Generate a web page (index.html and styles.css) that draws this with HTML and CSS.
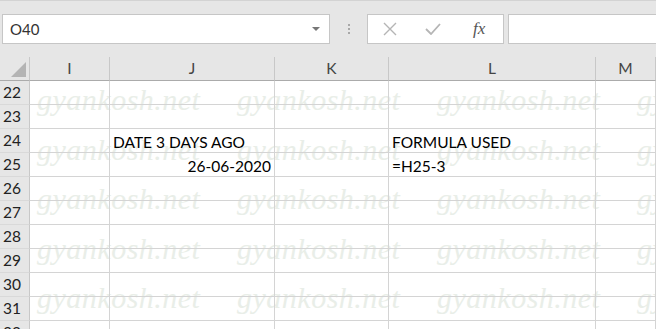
FILE: index.html
```html
<!DOCTYPE html>
<html lang="en">
<head>
    <meta charset="UTF-8">
    <meta name="viewport" content="width=device-width, initial-scale=1.0">
    <title>Sheet - date 3 days ago</title>
    <link rel="stylesheet" href="styles.css">
</head>
<body>
    <div class="formula-bar">
        <div class="name-box">
            <span>O40</span>
            <span class="caret"></span>
        </div>
        <div class="grip"><i></i><i></i><i></i></div>
        <div class="fn-box">
            <svg class="icon" width="14" height="14" viewBox="0 0 14 14">
                <path d="M1 1 L13 13 M13 1 L1 13" stroke="#b5b5b5" stroke-width="1.4" fill="none"/>
            </svg>
            <svg class="icon" width="16" height="12" viewBox="0 0 16 12">
                <path d="M1 6 L6 11 L15 1" stroke="#b5b5b5" stroke-width="1.8" fill="none"/>
            </svg>
            <span class="fx">fx</span>
        </div>
        <div class="formula-input"></div>
    </div>

    <div class="sheet">
        <!-- watermark sits behind the cells -->
        <div class="watermarks">
            <div class="marks" id="watermarks"></div>
        </div>

        <div class="grid" id="grid">
            <div class="corner"><span class="tri"></span></div>
            <div class="col-head">I</div>
            <div class="col-head">J</div>
            <div class="col-head">K</div>
            <div class="col-head">L</div>
            <div class="col-head">M</div>
        </div>
    </div>

    <script>
        const cells = {
            24: { J: { text: 'DATE 3 DAYS AGO' }, L: { text: 'FORMULA USED' } },
            25: { J: { text: '26-06-2020', right: true }, L: { text: '=H25-3' } }
        };
        const cols = ['I', 'J', 'K', 'L', 'M'];
        const grid = document.getElementById('grid');

        for (let r = 22; r <= 32; r++) {
            const head = document.createElement('div');
            head.className = 'row-head';
            head.textContent = r;
            grid.appendChild(head);

            cols.forEach(c => {
                const cell = document.createElement('div');
                cell.className = 'cell';
                const data = cells[r] && cells[r][c];
                if (data) {
                    cell.textContent = data.text;
                    if (data.right) cell.classList.add('num');
                }
                grid.appendChild(cell);
            });
        }

        const marks = document.getElementById('watermarks');
        for (let i = 0; i < 20; i++) {
            const m = document.createElement('span');
            m.textContent = 'gyankosh.net';
            marks.appendChild(m);
        }
    </script>
</body>
</html>
```

FILE: styles.css
```css
body {
    margin: 0;
    width: 656px;
    height: 329px;
    overflow: hidden;
    background-color: #e6e6e6;
    border-top: 1px solid #d3d3d3;
    font-family: Lato, "Liberation Sans", sans-serif;
    color: #000;
}
.formula-bar {
    display: flex;
    height: 30px;
    margin-top: 13px;
    padding-left: 2px;
}
.name-box {
    width: 328px;
    box-sizing: border-box;
    background-color: #fff;
    border: 1px solid #c6c6c6;
    display: flex;
    align-items: center;
    justify-content: space-between;
    padding: 0 9px 0 7px;
    font-size: 15px;
    color: #333;
}
.caret {
    width: 0;
    height: 0;
    border-left: 4px solid transparent;
    border-right: 4px solid transparent;
    border-top: 4px solid #777;
}
.grip {
    width: 37px;
    display: flex;
    flex-direction: column;
    align-items: center;
    justify-content: center;
    gap: 2px;
}
.grip i {
    width: 2px;
    height: 2px;
    background-color: #a8a8a8;
}
.fn-box {
    width: 137px;
    box-sizing: border-box;
    background-color: #fff;
    border: 1px solid #c6c6c6;
    display: flex;
    align-items: center;
    padding-left: 15px;
    gap: 28px;
}
.fn-box .icon {
    display: block;
}
.fx {
    font-family: "Liberation Serif", serif;
    font-style: italic;
    font-size: 17px;
    color: #555;
    margin-left: 4px;
}
.formula-input {
    flex: 1;
    margin-left: 4px;
    background-color: #fff;
    border: 1px solid #c6c6c6;
    border-right: none;
}
.sheet {
    position: relative;
    margin-top: 13px;
    background-color: #fff;
}
.grid {
    position: relative;
    z-index: 1;
    display: grid;
    grid-template-columns: 30px 80px 165px 114px 207px 1fr;
    grid-auto-rows: 24px;
}
.corner,
.col-head,
.row-head,
.cell {
    box-sizing: border-box;
    border-right: 1px solid #d4d4d4;
    border-bottom: 1px solid #d4d4d4;
}
.corner {
    background-color: #e6e6e6;
    border-right-color: #c8c8c8;
    border-bottom-color: #ababab;
    display: flex;
    align-items: flex-end;
    justify-content: flex-end;
    padding: 0 3px 3px 0;
}
.tri {
    width: 0;
    height: 0;
    border-left: 15px solid transparent;
    border-bottom: 15px solid #b4b4b4;
}
.col-head {
    background-color: #e6e6e6;
    border-right-color: #c8c8c8;
    border-bottom-color: #ababab;
    text-align: center;
    line-height: 23px;
    font-size: 15.5px;
    color: #444;
}
.row-head {
    background-color: #e6e6e6;
    border-right-color: #c8c8c8;
    border-bottom-color: #d9d9d9;
    line-height: 23px;
    padding-left: 3px;
    font-size: 15.5px;
    color: #222;
}
.cell {
    display: flex;
    align-items: flex-end;
    padding: 0 3px;
    font-size: 15.5px;
    line-height: 1.2;
    white-space: nowrap;
}
.cell.num {
    justify-content: flex-end;
}
.watermarks {
    position: absolute;
    z-index: 0;
    top: 24px;
    left: 30px;
    right: 0;
    bottom: 0;
    overflow: hidden;
}
.marks {
    display: grid;
    grid-template-columns: repeat(4, 200px);
    grid-auto-rows: 49.5px;
    margin: -6px 0 0 7px;
    font-family: "Liberation Serif", serif;
    font-style: italic;
    font-size: 30px;
    letter-spacing: 0.5px;
    line-height: 49.5px;
    color: #e9eee8;
    white-space: nowrap;
}
```
